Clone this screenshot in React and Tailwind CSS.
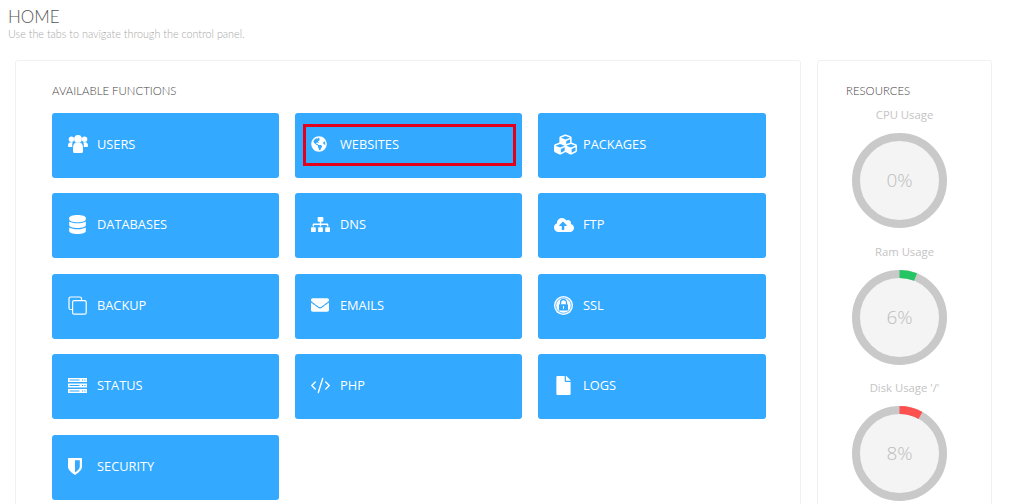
import React from "react";
import {
  FaGlobeAmericas,
  FaCubes,
  FaDatabase,
  FaSitemap,
  FaCloudUploadAlt,
  FaEnvelope,
  FaFile,
} from "react-icons/fa";
import { CodeXml } from "lucide-react";

// drawn by hand, the icon packs only have the newer shapes of these
const UsersIcon = () => (
  <svg viewBox="0 0 20 19" className="h-[19px] w-[20px]" fill="white">
    <circle cx="3.4" cy="4.2" r="2.7" />
    <circle cx="16.6" cy="4.2" r="2.7" />
    <path d="M0 11.2C0 8.4 1 7.3 2.6 7.3h2.2c-.4.8-.6 1.8-.6 3 0 .6.1 1.1.2 1.6H1C.4 11.9 0 11.6 0 11.2z" />
    <path d="M20 11.2c0-2.800-1-3.900-2.600-3.900h-2.200c.4.800.6 1.800.6 3 0 .6-.1 1.100-.2 1.600h3.400c.6 0 1-.3 1-.7z" />
    <circle cx="10" cy="3.900" r="3.900" />
    <path d="M5 13.200c0-3.600 1.200-5.500 3.200-5.500h3.600c2 0 3.200 1.900 3.200 5.500v3.300c0 1.100-.9 1.500-2 1.500H7c-1.100 0-2-.4-2-1.500z" />
  </svg>
);

const CloneIcon = () => (
  <svg viewBox="0 0 19 19" className="h-[19px] w-[19px]" fill="none" stroke="white" strokeWidth="1.2">
    <path d="M4.500 13.500H2.500a1.500 1.500 0 0 1-1.500-1.500V2.500A1.500 1.500 0 0 1 2.500 1h9.500A1.500 1.500 0 0 1 13.500 2.500v2" />
    <rect x="4.600" y="4.600" width="13.600" height="13.600" rx="1.500" />
  </svg>
);

const ServerIcon = () => (
  <svg viewBox="0 0 19 15" className="h-[15px] w-[19px]" fill="white">
    <path fillRule="evenodd" d="M0 0h19v4H0zM1.500 1.600h10v.8h-10zM14 1.500h1.200v1H14zM16.300 1.500h1.200v1h-1.200z" />
    <path fillRule="evenodd" d="M0 5.500h19v4H0zM1.500 7.100h10v.8h-10zM14 7h1.200v1H14zM16.300 7h1.200v1h-1.200z" />
    <path fillRule="evenodd" d="M0 11h19v4H0zM1.500 12.600h10v.8h-10zM14 12.500h1.200v1H14zM16.300 12.500h1.200v1h-1.200z" />
  </svg>
);

const ShieldIcon = () => (
  <svg viewBox="0 0 14 17" className="h-[17px] w-[14px]" fill="white">
    <path
      fillRule="evenodd"
      d="M.6 0h12.800c.3 0 .6.3.6.6v8c0 3.800-4.600 7-7 8.400C4.600 15.600 0 12.400 0 8.600v-8C0 .3.300 0 .6 0zM7 2.200v12.400c1.700-1.100 4.800-3.500 4.800-6V2.200z"
    />
  </svg>
);

const SslIcon = () => (
  <svg viewBox="0 0 19 19" className="h-[19px] w-[19px]">
    <circle cx="9.500" cy="9.500" r="9.500" fill="white" />
    <circle cx="9.500" cy="9.500" r="7.700" fill="none" stroke="#33a9ff" strokeWidth="0.8" />
    <path d="M6.500 8.500V6.500a3 3 0 0 1 6 0v2" fill="none" stroke="#33a9ff" strokeWidth="1.300" />
    <rect x="5" y="8.300" width="9" height="6.200" rx="0.600" fill="#33a9ff" />
    <rect x="9" y="10" width="1" height="2.800" fill="white" />
  </svg>
);

const functions = [
  { label: "USERS", icon: <UsersIcon /> },
  { label: "WEBSITES", icon: <FaGlobeAmericas className="text-[16px]" />, marked: true },
  { label: "PACKAGES", icon: <FaCubes className="text-[23px]" /> },
  { label: "DATABASES", icon: <FaDatabase className="text-[19px]" /> },
  { label: "DNS", icon: <FaSitemap className="text-[19px]" /> },
  { label: "FTP", icon: <FaCloudUploadAlt className="text-[20px]" /> },
  { label: "BACKUP", icon: <CloneIcon /> },
  { label: "EMAILS", icon: <FaEnvelope className="text-[18px]" /> },
  { label: "SSL", icon: <SslIcon /> },
  { label: "STATUS", icon: <ServerIcon /> },
  { label: "PHP", icon: <CodeXml className="ml-[-1px] h-[21px] w-[21px]" strokeWidth={1.6} /> },
  { label: "LOGS", icon: <FaFile className="text-[19px]" /> },
  { label: "SECURITY", icon: <ShieldIcon /> },
];

const resources = [
  { label: "CPU Usage", value: 0, color: "#22c55e" },
  { label: "Ram Usage", value: 6, color: "#25c564" },
  { label: "Disk Usage '/'", value: 8, color: "#ff5050" },
];

const FunctionButton = ({ label, icon, marked }) => (
  <a className="relative flex h-[65px] items-center rounded-[3px] bg-[#33a9ff] pl-4 pb-[2px] font-['Open_Sans',sans-serif] text-[12.8px] text-white">
    <span className="flex w-[29px] shrink-0 items-center justify-start">{icon}</span>
    <span>{label}</span>
    {marked && (
      <span className="absolute left-[8px] top-[11px] h-[42px] w-[213px] border-[3px] border-[#e3001b]" />
    )}
  </a>
);

const Gauge = ({ label, value, color }) => {
  const r = 43.5;
  const circumference = 2 * Math.PI * r;
  return (
    <div className="flex h-[136.5px] flex-col">
      <p className="h-[19px] whitespace-nowrap text-center font-['Open_Sans',sans-serif] text-[11.3px] leading-[19px] text-[#c4c4c4]">
        {label}
      </p>
      <div className="relative ml-[6px] mt-[9px] h-[95px] w-[95px]">
        <svg viewBox="0 0 95 95" className="h-[95px] w-[95px]">
          <circle cx="47.5" cy="47.5" r={r} fill="#f4f4f4" stroke="#c9c9c9" strokeWidth="8" />
          <circle
            cx="47.5"
            cy="47.5"
            r={r}
            fill="none"
            stroke={color}
            strokeWidth="8"
            strokeDasharray={`${(circumference * value) / 100} ${circumference}`}
            transform="rotate(-90 47.5 47.5)"
          />
        </svg>
        <span className="absolute inset-0 flex items-center justify-center font-['Open_Sans',sans-serif] text-[19px] font-light text-[#bdbdbd]">
          {value}%
        </span>
      </div>
    </div>
  );
};

const App = () => {
  return (
    <div className="h-[504px] w-[1024px] overflow-hidden bg-white font-['Lato',sans-serif]">
      <div className="pl-2 pt-[8px]">
        <h1 className="text-[17px] font-light leading-[18px] text-[#555]">HOME</h1>
        <p className="text-[10.8px] font-light leading-[15px] text-[#a8a8a8]">
          Use the tabs to navigate through the control panel.
        </p>
      </div>
      <div className="mt-[19px] flex gap-4 pl-[15px]">
        <div className="h-[470px] w-[786px] rounded-[3px] border border-[#eef2f3] pl-9 pt-[23px]">
          <h2 className="text-[11.4px] font-light leading-[13px] text-[#444]">AVAILABLE FUNCTIONS</h2>
          <div className="mt-[15.8px] grid grid-cols-[227px_227px_228px] gap-x-4 gap-y-[15.5px]">
            {functions.map((item) => (
              <FunctionButton key={item.label} {...item} />
            ))}
          </div>
        </div>
        <div className="h-[470px] w-[175px] rounded-[3px] border border-[#eef2f3] pl-[28px] pr-[28px] pt-[23px]">
          <h2 className="whitespace-nowrap text-[11.4px] font-light leading-[13px] text-[#444]">RESOURCES</h2>
          <div className="mt-[8px]">
            {resources.map((item) => (
              <Gauge key={item.label} {...item} />
            ))}
          </div>
        </div>
      </div>
    </div>
  );
};

export default App;
